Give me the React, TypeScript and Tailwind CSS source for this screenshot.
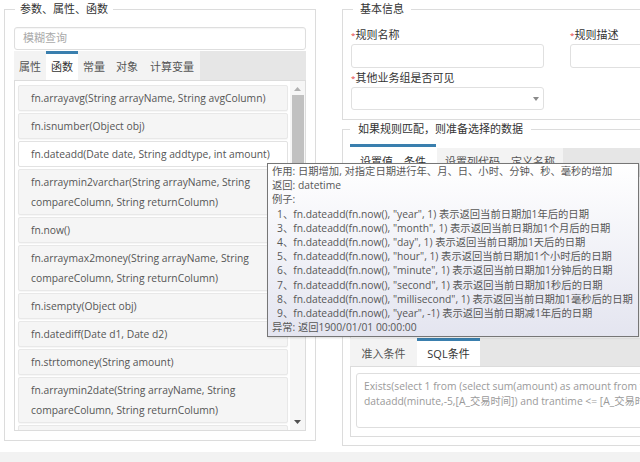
import React from "react";

const items: { lines: string[]; hover?: boolean }[] = [
  { lines: ["fn.arrayavg(String arrayName, String avgColumn)"] },
  { lines: ["fn.isnumber(Object obj)"] },
  { lines: ["fn.dateadd(Date date, String addtype, int amount)"], hover: true },
  { lines: ["fn.arraymin2varchar(String arrayName, String", "compareColumn, String returnColumn)"] },
  { lines: ["fn.now()"] },
  { lines: ["fn.arraymax2money(String arrayName, String", "compareColumn, String returnColumn)"] },
  { lines: ["fn.isempty(Object obj)"] },
  { lines: ["fn.datediff(Date d1, Date d2)"] },
  { lines: ["fn.strtomoney(String amount)"] },
  { lines: ["fn.arraymin2date(String arrayName, String", "compareColumn, String returnColumn)"] },
  { lines: ["fn.arraymin2money(String arrayName, String", "compareColumn, String returnColumn)"] },
];

const examples = [
  ["1", "\"year\", 1)", "表示返回当前日期加1年后的日期"],
  ["3", "\"month\", 1)", "表示返回当前日期加1个月后的日期"],
  ["4", "\"day\", 1)", "表示返回当前日期加1天后的日期"],
  ["5", "\"hour\", 1)", "表示返回当前日期加1个小时后的日期"],
  ["6", "\"minute\", 1)", "表示返回当前日期加1分钟后的日期"],
  ["7", "\"second\", 1)", "表示返回当前日期加1秒后的日期"],
  ["8", "\"millisecond\", 1)", "表示返回当前日期加1毫秒后的日期"],
  ["9", "\"year\", -1)", "表示返回当前日期减1年后的日期"],
];

function Label({ text }: { text: string }) {
  return (
    <div className="text-[11px] leading-[16px] text-[#333]">
      <span className="text-[#e4393c] text-[8px] align-top">*</span>
      {text}
    </div>
  );
}

export default function App() {
  return (
    <div className="relative w-[640px] h-[462px] overflow-hidden bg-white text-[#333] font-['Open_Sans','Noto_Sans_CJK_SC',sans-serif]">
      <div className="flex h-[452px]">
        {/* Left column */}
        <div className="pl-[4px] w-[342px] shrink-0">
          <fieldset className="w-[312px] border border-[#dcdcdc] px-[9px] pt-[9px] pb-[9px]">
            <legend className="ml-[1px] px-[5px] leading-[18px] text-[11px] text-[#333]">参数、属性、函数</legend>
            <div className="h-[23px] border border-[#dedede] rounded-[3px] pl-[8px] flex items-center text-[11px] text-[#aaa] shadow-[inset_0_1px_1px_rgba(0,0,0,0.04)]">
              模糊查询
            </div>
            <div className="mt-[1px] flex h-[29px] bg-[#e6e6e6] text-[11px] text-[#555]">
              <div className="w-[32px] bg-[#f3f3f3] border-t-[3px] border-transparent flex items-center justify-center">属性</div>
              <div className="w-[32px] bg-white border-t-[3px] border-[#3a7fae] flex items-center justify-center text-[#333]">函数</div>
              <div className="w-[32px] bg-[#f3f3f3] border-t-[3px] border-transparent flex items-center justify-center">常量</div>
              <div className="w-[34px] bg-[#f3f3f3] border-t-[3px] border-transparent flex items-center justify-center">对象</div>
              <div className="w-[56px] bg-[#f3f3f3] border-t-[3px] border-transparent flex items-center justify-center">计算变量</div>
            </div>
            <div className="h-[351px] border border-[#dcdcdc] flex overflow-hidden">
              <div className="w-[273px] pl-[3px] pt-[4px] flex flex-col gap-[2px] shrink-0">
                {items.map((it, i) => (
                  <div
                    key={i}
                    className={
                      "w-[270px] shrink-0 rounded-[2px] border pl-[12px] py-[2px] text-[10.3px] leading-[20px] text-[#555] whitespace-nowrap " +
                      (it.hover
                        ? "bg-white border-[#e2e2e2]"
                        : "bg-[#f5f5f5] border-[#e8e8e8] shadow-[0_1px_1px_rgba(0,0,0,0.04)]")
                    }
                  >
                    {it.lines.map((l, j) => (
                      <div key={j}>{l}</div>
                    ))}
                  </div>
                ))}
              </div>
              <div className="ml-[2px] w-[15px] bg-[#f6f6f6] flex flex-col items-center">
                <svg width="7" height="4" viewBox="0 0 7 4" className="mt-[6px]">
                  <path d="M0 4 L3.5 0 L7 4 Z" fill="#b0b0b0" />
                </svg>
                <div className="mt-[4px] w-[12px] h-[71px] bg-[#c1c1c1]" />
                <div className="flex-1" />
                <svg width="7" height="4" viewBox="0 0 7 4" className="mb-[6px]">
                  <path d="M0 0 L7 0 L3.5 4 Z" fill="#505050" />
                </svg>
              </div>
            </div>
          </fieldset>
        </div>

        {/* Right column */}
        <div className="w-[330px] shrink-0">
          <fieldset className="border border-[#dcdcdc] pl-[8px] pr-[8px] pt-[9px] pb-[9px]">
            <legend className="ml-[2px] px-[7px] leading-[18px] text-[11px] text-[#333]">基本信息</legend>
            <div className="grid grid-cols-[193px_193px] gap-x-[26px]">
              <div>
                <Label text="规则名称" />
                <div className="mt-[1px] h-[24px] border border-[#e0e0e0] rounded-[3px] bg-white" />
              </div>
              <div>
                <Label text="规则描述" />
                <div className="mt-[1px] h-[24px] border border-[#e0e0e0] rounded-[3px] bg-white" />
              </div>
              <div className="mt-[2px]">
                <Label text="其他业务组是否可见" />
                <div className="mt-[1px] h-[23px] border border-[#e0e0e0] rounded-[3px] bg-white flex items-center justify-end pr-[4px]">
                  <svg width="6" height="4" viewBox="0 0 6 4">
                    <path d="M0 0 L6 0 L3 4 Z" fill="#8a8a8a" />
                  </svg>
                </div>
              </div>
            </div>
          </fieldset>

          <fieldset className="border border-[#dcdcdc] pl-[7px] pt-[6px] pb-[8px]">
            <legend className="px-[8px] leading-[18px] text-[11px] text-[#333]">如果规则匹配，则准备选择的数据</legend>
            <div className="flex items-end h-[33px] text-[11px] text-[#555]">
              <div className="w-[86px] h-[33px] bg-white border-t-[3px] border-[#3a7fae] flex items-center justify-center text-[#333]">设置值、条件</div>
              <div className="ml-[1px] w-[126px] h-[29px] bg-[#f3f3f3] flex items-center justify-center">设置列代码、定义名称</div>
              <div className="flex-1 h-[29px] bg-[#e6e6e6]" />
            </div>
            <div className="h-[161px] border-x border-[#e6e6e6]" />
            <div className="flex h-[28px] text-[11px] text-[#555]">
              <div className="w-[67px] bg-[#f3f3f3] border-t-[3px] border-transparent flex items-center justify-center pt-[2px]">准入条件</div>
              <div className="w-[63px] bg-white border-t-[3px] border-[#3a7fae] flex items-center justify-center text-[#333] pt-[2px]">SQL条件</div>
              <div className="flex-1 bg-[#e6e6e6]" />
            </div>
            <div className="h-[71px] border border-[#dcdcdc] pl-[5px] pt-[6px]">
              <div className="h-[55px] border border-[#dedede] rounded-[3px] pl-[7px] pt-[5px] text-[10.3px] leading-[15px] text-[#9a9a9a] whitespace-nowrap overflow-hidden">
                <div>Exists(select 1 from (select sum(amount) as amount from tran</div>
                <div>dataadd(minute,-5,[A_交易时间]) and trantime &lt;= [A_交易时间]</div>
              </div>
            </div>
          </fieldset>
        </div>
      </div>
      <div className="h-[10px] bg-[#f2f2f2]" />

      {/* Tooltip */}
      <div className="absolute left-[267px] top-[163px] w-[372px] h-[174px] border border-[#767676] bg-gradient-to-b from-white to-[#e4e5f0] px-[4px] text-[10.3px] leading-[14.2px] text-[#575757] whitespace-nowrap shadow-[1px_1px_2px_rgba(0,0,0,0.15)]">
        <div>作用: 日期增加, 对指定日期进行年、月、日、小时、分钟、秒、毫秒的增加</div>
        <div>返回: datetime</div>
        <div>例子:</div>
        {examples.map((e, i) => (
          <div key={i} className="pl-[5px]">
            {e[0]}、fn.dateadd(fn.now(), {e[1]} {e[2]}
          </div>
        ))}
        <div>异常: 返回1900/01/01 00:00:00</div>
      </div>
    </div>
  );
}
